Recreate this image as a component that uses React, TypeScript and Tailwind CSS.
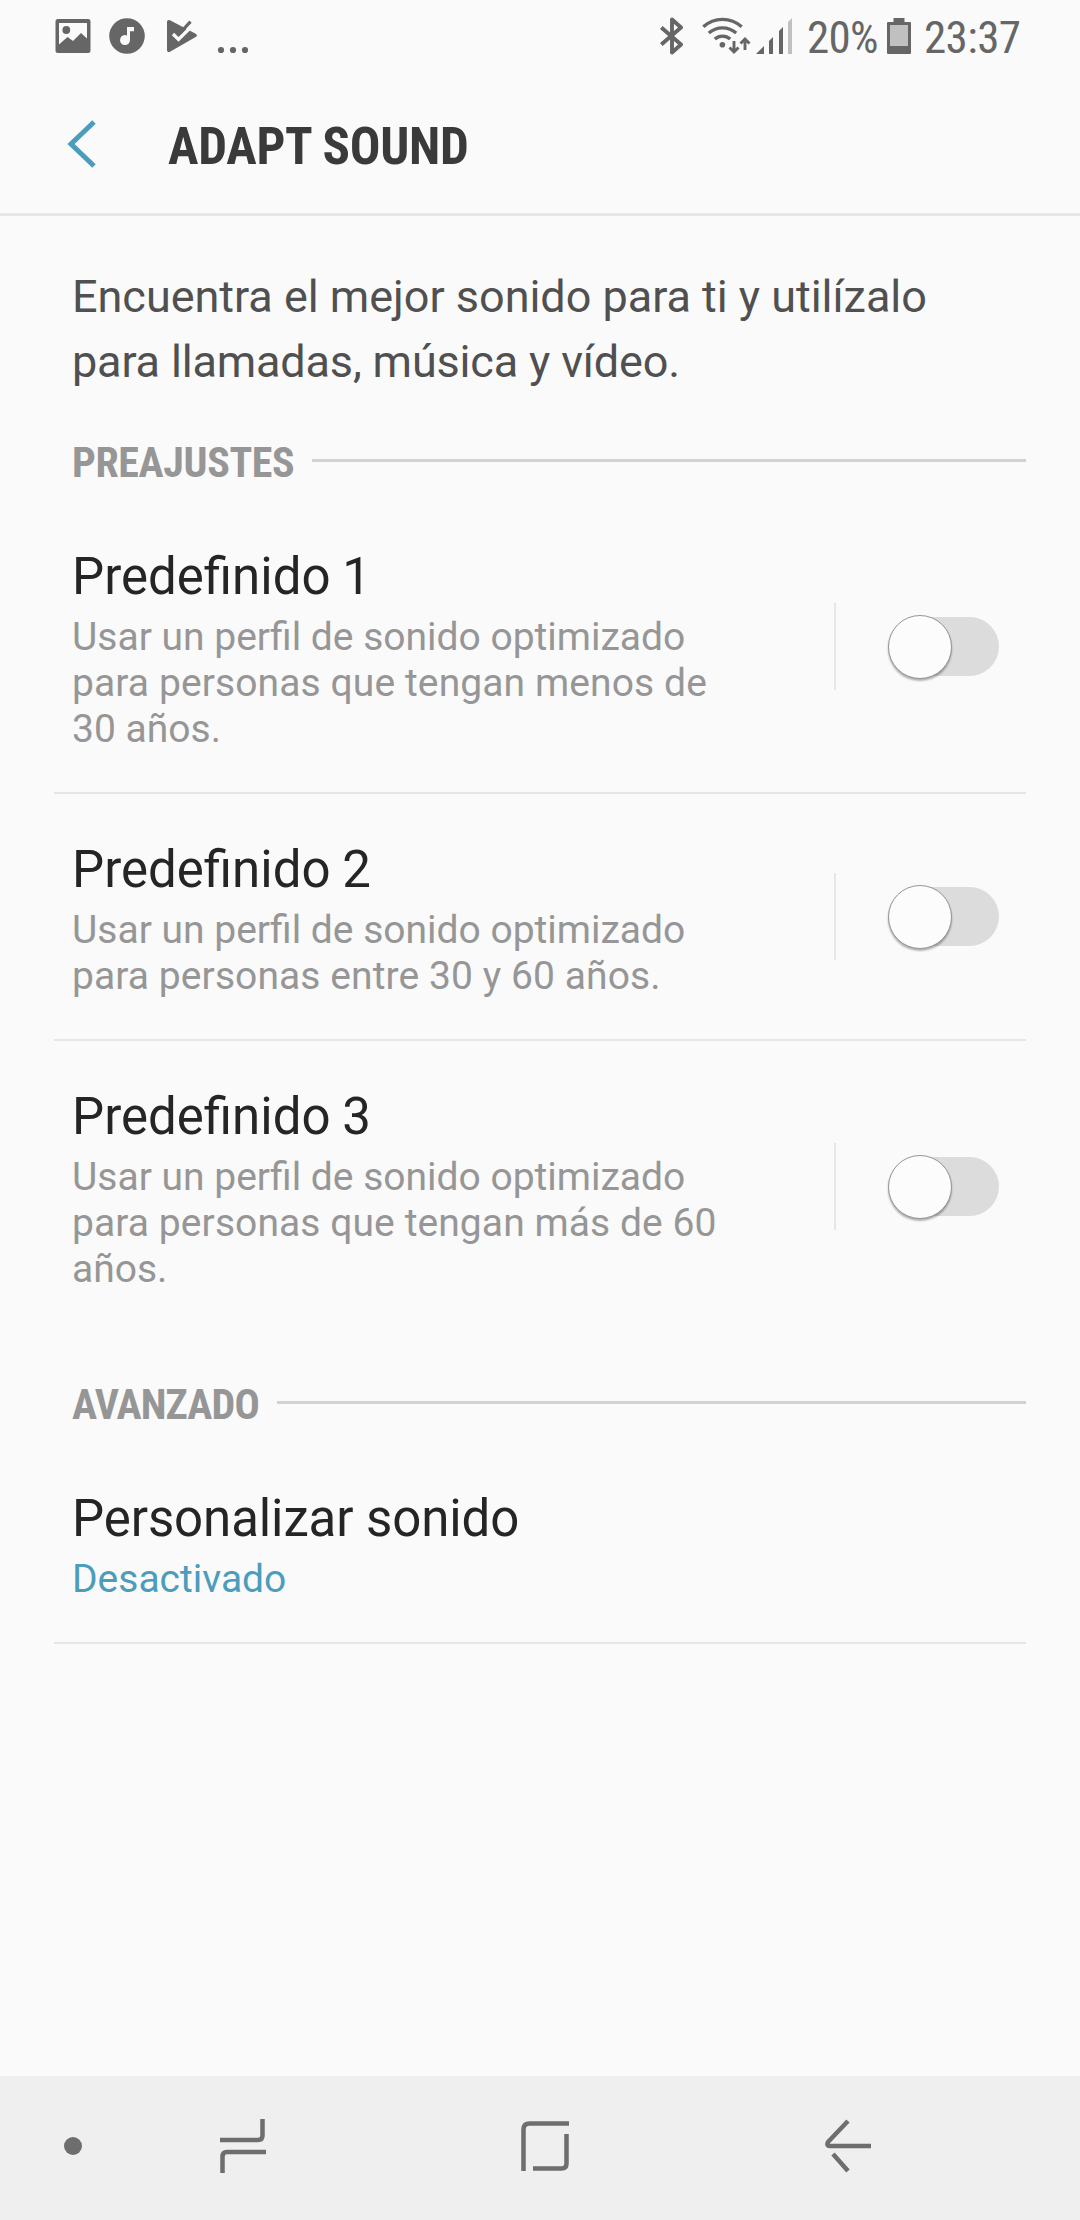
import React from "react";

function StatusBar() {
  return (
    <header className="flex h-[72px] shrink-0 items-start pl-[55px] pr-[59px] text-[#666666]">
      <svg className="mt-[18px] h-[36px] w-[36px] shrink-0" viewBox="0 0 36 36" fill="currentColor">
        <path fillRule="evenodd" d="M3 1h30a2.500 2.500 0 0 1 2.500 2.500v29a2.500 2.500 0 0 1-2.500 2.500H3a2.500 2.500 0 0 1-2.500-2.500v-29A2.500 2.500 0 0 1 3 1zM4 5v21.500l8.500-7.500 5.500 4 8-8 6 5.500V5z" />
        <circle cx="11.300" cy="12" r="3.900" />
      </svg>
      <svg className="ml-[18px] mt-[18px] h-[36px] w-[36px] shrink-0" viewBox="0 0 36 36">
        <circle cx="18" cy="18" r="17.800" fill="currentColor" />
        <path d="M18 9h7v4.200h-4v8.600a5 5 0 1 1-3-4.300z" fill="#fafafa" />
      </svg>
      <svg className="ml-[22px] mt-[18px] h-[36px] w-[32px] shrink-0" viewBox="0 0 32 36">
        <path d="M0 4C0 2 1.500 1.500 3 2.300L28.700 15.800c1.600 1 1.600 2.300 0 3.300L3 33.700c-1.500.8-3 .2-3-1.800z" fill="currentColor" />
        <path d="M6 16l5.500 5.500L25.500 7.500" fill="none" stroke="#fafafa" strokeWidth="3.200" />
        <path d="M12.500 15.500L23.500 3.700" fill="none" stroke="currentColor" strokeWidth="3.200" />
      </svg>
      <svg className="ml-[18px] mt-[46px] h-[8px] w-[32px] shrink-0" viewBox="0 0 32 8" fill="currentColor">
        <circle cx="4" cy="4" r="3.100" />
        <circle cx="16" cy="4" r="3.100" />
        <circle cx="28" cy="4" r="3.100" />
      </svg>
      <div className="flex-1" />
      <svg className="mt-[17px] h-[38px] w-[24px] shrink-0" viewBox="0 0 24 38" fill="none" stroke="currentColor" strokeWidth="3.900">
        <path d="M1.300 10.500L21 27.500 12 35.500V2.500l9 8L1.300 27.500" strokeLinejoin="round" />
      </svg>
      <svg className="ml-[18px] mt-[17px] h-[38px] w-[50px] shrink-0" viewBox="0 0 50 38" fill="none" stroke="currentColor">
        <path d="M1.300 9.800a28.500 28.500 0 0 1 38.400 0M6.800 16a20.700 20.700 0 0 1 27.400 0M12.800 22a11.500 11.500 0 0 1 15.400 0" strokeWidth="3.300" />
        <circle cx="20.400" cy="27.700" r="2.800" fill="currentColor" stroke="none" />
        <path d="M32 24v10.500M27.500 30.500l4.500 4.500 4.500-4.500M43 33V22.500M38.500 26.500l4.500-4.500 4.500 4.500" strokeWidth="2.900" />
      </svg>
      <svg className="ml-[4px] mt-[18px] h-[36px] w-[36px] shrink-0" viewBox="0 0 36 36" fill="currentColor">
        <path d="M0 36l8-8v8zM13 36V23l4-4v17zM23 36V13l4-4v27z" />
        <path d="M32 36V4l4-4v36z" fill="#c0c0c0" />
      </svg>
      <span className="ml-[15px] mt-[11px] w-[71px] whitespace-nowrap font-['Roboto_Condensed'] text-[45px] leading-[53px] tracking-[-0.7px]">20%</span>
      <svg className="ml-[9px] mt-[18px] h-[36px] w-[24px] shrink-0" viewBox="0 0 24 36">
        <path d="M6.500 0h11v4H23q1 0 1 1v30q0 1-1 1H1q-1 0-1-1V5q0-1 1-1h5.500z" fill="currentColor" />
        <path d="M3 7h18v21H3z" fill="#c0c0c0" />
      </svg>
      <span className="ml-[13px] mt-[11px] w-[97px] whitespace-nowrap font-['Roboto_Condensed'] text-[45px] leading-[53px] tracking-[-0.6px]">23:37</span>
    </header>
  );
}

function SectionTitle({ label, className }: { label: string; className: string }) {
  return (
    <div className={`ml-[72px] mr-[54px] flex h-[50px] items-center ${className}`}>
      <h2 className="whitespace-nowrap font-['Roboto_Condensed'] text-[42px] font-bold leading-[50px] text-[#969696]">{label}</h2>
      <div className="mb-[5px] ml-[18px] h-[3px] flex-1 bg-[#d2d2d2]" />
    </div>
  );
}

function Toggle() {
  return (
    <div className="flex h-[59px] w-[111px] items-center">
      <div className="ml-[2px] flex h-[59px] w-[109px] items-center rounded-full bg-[#dcdcdc]">
        <div className="-ml-[2px] mt-px h-[64px] w-[64px] shrink-0 rounded-full border border-[#969696] bg-[#fcfcfc] shadow-[0_2px_2px_rgba(0,0,0,0.3)]" />
      </div>
    </div>
  );
}

type Line = { text: string; spacing?: string };

function PresetRow({ title, lines, last }: { title: string; lines: Line[]; last?: boolean }) {
  return (
    <div className={`mx-[54px] flex border-[#e6e6e6] pl-[18px] ${last ? "" : "border-b-2"}`}>
      <div className="flex-1 pb-[40px] pt-[46px]">
        <h3 className="mb-[7px] text-[51px] leading-[60px] text-[#252525] [word-spacing:-1px]">{title}</h3>
        {lines.map((line) => (
          <p key={line.text} className={`whitespace-nowrap text-[39px] leading-[46px] text-[#969696] ${line.spacing ?? ""}`}>{line.text}</p>
        ))}
      </div>
      <div className="flex items-center self-stretch pr-[27px]">
        <div className="mr-[52px] h-[87px] w-[2px] bg-[#e6e6e6]" />
        <Toggle />
      </div>
    </div>
  );
}

function NavBar() {
  return (
    <nav className="flex h-[144px] shrink-0 items-center bg-[#efefef] pb-[4px] text-[#6e6e6e]">
      <div className="ml-[64px] h-[18px] w-[18px] rounded-full bg-current" />
      <svg className="ml-[137px] h-[54px] w-[48px]" viewBox="0 0 48 54" fill="none" stroke="currentColor" strokeWidth="4.500">
        <path d="M1 21h38q4.500 0 4.500-4.500V0M47 33H8q-4.500 0-4.500 4.500V54" />
      </svg>
      <svg className="ml-[252px] h-[52px] w-[52px]" viewBox="0 0 52 52" fill="none" stroke="currentColor" strokeWidth="4.500">
        <path d="M4.500 51V9.500q0-6 6-6H50M47.500 14v29.500q0 5-5 5H14" />
      </svg>
      <svg className="ml-[253px] h-[54px] w-[48px]" viewBox="0 0 48 54" fill="none" stroke="currentColor" strokeWidth="4.500">
        <path d="M24 2L4 23q-2 4 2 4h41M9 35l15 17" />
      </svg>
    </nav>
  );
}

export default function App() {
  return (
    <div className="flex h-[2220px] w-[1080px] flex-col bg-[#fafafa] font-['Roboto',sans-serif]">
      <StatusBar />
      <div className="flex h-[144px] shrink-0 items-center border-b-[3px] border-[#e6e6e6] pt-[3px]">
        <svg className="ml-[66px] h-[50px] w-[32px]" viewBox="0 0 32 50" fill="none" stroke="#4b9dbb" strokeWidth="5">
          <path d="M28 3L5 25l23 22" />
        </svg>
        <h1 className="ml-[70px] mt-[5px] whitespace-nowrap font-['Roboto_Condensed'] text-[51px] font-bold leading-[60px] tracking-[-0.27px] text-[#3a3a3a]">ADAPT SOUND</h1>
      </div>
      <main className="flex-1">
        <p className="ml-[72px] mt-[48px] whitespace-nowrap text-[45px] leading-[65px] text-[#505050]">
          <span className="tracking-[-0.03px]">Encuentra el mejor sonido para ti y utilízalo</span>
          <br />
          <span className="tracking-[-0.17px]">para llamadas, música y vídeo.</span>
        </p>
        <SectionTitle label="PREAJUSTES" className="mt-[44px] tracking-[-0.37px]" />
        <div className="mt-[13px]">
          <PresetRow
            title="Predefinido 1"
            lines={[
              { text: "Usar un perfil de sonido optimizado" },
              { text: "para personas que tengan menos de", spacing: "tracking-[0.1px]" },
              { text: "30 años." },
            ]}
          />
          <PresetRow
            title="Predefinido 2"
            lines={[
              { text: "Usar un perfil de sonido optimizado" },
              { text: "para personas entre 30 y 60 años.", spacing: "tracking-[0.08px]" },
            ]}
          />
          <PresetRow
            title="Predefinido 3"
            lines={[
              { text: "Usar un perfil de sonido optimizado" },
              { text: "para personas que tengan más de 60", spacing: "tracking-[0.08px]" },
              { text: "años." },
            ]}
            last
          />
        </div>
        <SectionTitle label="AVANZADO" className="mt-[48px] tracking-[-0.85px]" />
        <div className="mx-[54px] mt-[13px] border-b-2 border-[#e6e6e6] pb-[40px] pl-[18px] pt-[46px]">
          <h3 className="mb-[7px] text-[51px] leading-[60px] tracking-[-0.1px] text-[#252525]">Personalizar sonido</h3>
          <p className="text-[39px] leading-[46px] text-[#4b9dbb]">Desactivado</p>
        </div>
      </main>
      <NavBar />
    </div>
  );
}
